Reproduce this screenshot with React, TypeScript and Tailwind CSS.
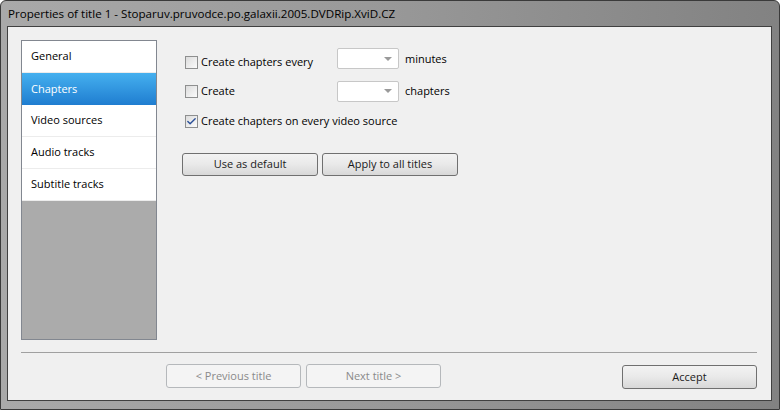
import { Check } from "lucide-react";

const font = { fontFamily: '"Open Sans", "Noto Sans", sans-serif' };

function Checkbox({ checked }: { checked?: boolean }) {
  return (
    <span className="flex h-[13px] w-[13px] shrink-0 items-center justify-center border border-[#8e8f8f] bg-gradient-to-br from-[#dcdcdc] to-[#fbfbfb]">
      {checked && <Check className="h-[11px] w-[11px] text-[#2a4f98]" strokeWidth={3} />}
    </span>
  );
}

function Combo() {
  return (
    <div className="flex h-[21px] w-[62px] items-center justify-end rounded-[2px] border border-[#c7c7c7] bg-white pr-[6px]">
      <span className="h-0 w-0 border-x-[4px] border-t-[4px] border-x-transparent border-t-[#9a9a9a]" />
    </div>
  );
}

function Button({ label, disabled, w = "w-[136px]", h = "h-[24px]" }: { label: string; disabled?: boolean; w?: string; h?: string }) {
  return (
    <button
      className={
        disabled
          ? `${w} ${h} rounded-[3px] border border-[#b5b8bb] bg-[#f4f4f4] text-[11px] text-[#8a8a8a]`
          : `${w} ${h} rounded-[3px] border border-[#707070] bg-gradient-to-b from-[#f3f3f3] via-[#e9e9e9] to-[#d8d8d8] text-[11px] text-[#1a1a1a]`
      }
    >
      {label}
    </button>
  );
}

const pages = ["General", "Chapters", "Video sources", "Audio tracks", "Subtitle tracks"];

export default function App() {
  return (
    <div
      className="flex h-[410px] w-[780px] flex-col rounded-t-[6px] border border-[#3a3a3a] bg-gradient-to-r from-[#a9a9a9] via-[#989898] to-[#828282]"
      style={font}
    >
      {/* Title bar */}
      <div className="flex h-[25px] items-center pl-[7px] text-[11.6px] text-black">
        Properties of title 1 - Stoparuv.pruvodce.po.galaxii.2005.DVDRip.XviD.CZ
      </div>

      {/* Client area */}
      <div className="mb-[8px] ml-[6px] mr-[7px] flex flex-1 flex-col border border-[#404040] bg-[#f0f0f0] pl-[13px] pr-[14px] pt-[13px]">
        <div className="flex h-[300px] gap-[28px]">
          {/* Page list */}
          <div className="flex w-[136px] flex-col border border-[#828790] bg-[#ababab]">
            {pages.map((p, i) =>
              i === 1 ? (
                <div
                  key={p}
                  className="flex h-[32px] items-center bg-gradient-to-b from-[#45b0ef] to-[#1f7dd0] pl-[9px] text-[11px] text-white"
                >
                  {p}
                </div>
              ) : (
                <div
                  key={p}
                  className="flex h-[32px] items-center border-b border-[#ececec] bg-white pl-[9px] text-[11px] text-black"
                >
                  {p}
                </div>
              )
            )}
          </div>

          {/* Settings */}
          <div className="flex flex-col pt-[6px] text-[11px] text-black">
            <div className="flex h-[30px] items-center">
              <div className="flex w-[152px] items-center gap-[3px] pt-[2px]">
                <Checkbox />
                <span>Create chapters every</span>
              </div>
              <div className="-mt-[5px]">
                <Combo />
              </div>
              <span className="ml-[6px] -mt-[4px]">minutes</span>
            </div>
            <div className="flex h-[30px] items-center">
              <div className="flex w-[152px] items-center gap-[3px]">
                <Checkbox />
                <span>Create</span>
              </div>
              <Combo />
              <span className="ml-[6px]">chapters</span>
            </div>
            <div className="flex h-[30px] items-center gap-[3px]">
              <Checkbox checked />
              <span>Create chapters on every video source</span>
            </div>
            <div className="-ml-[3px] mt-[17px] flex gap-[4px]">
              <Button label="Use as default" h="h-[23px]" />
              <Button label="Apply to all titles" h="h-[23px]" />
            </div>
          </div>
        </div>

        {/* Separator */}
        <div className="mt-[12px] h-[2px] border-t border-[#a0a0a0] border-b-white" />

        {/* Footer buttons */}
        <div className="mt-[9px] flex items-center">
          <div className="ml-[145px] flex gap-[5px]">
            <Button label="< Previous title" disabled w="w-[135px]" />
            <Button label="Next title >" disabled w="w-[135px]" />
          </div>
          <div className="ml-auto">
            <Button label="Accept" w="w-[135px]" />
          </div>
        </div>
      </div>
    </div>
  );
}
